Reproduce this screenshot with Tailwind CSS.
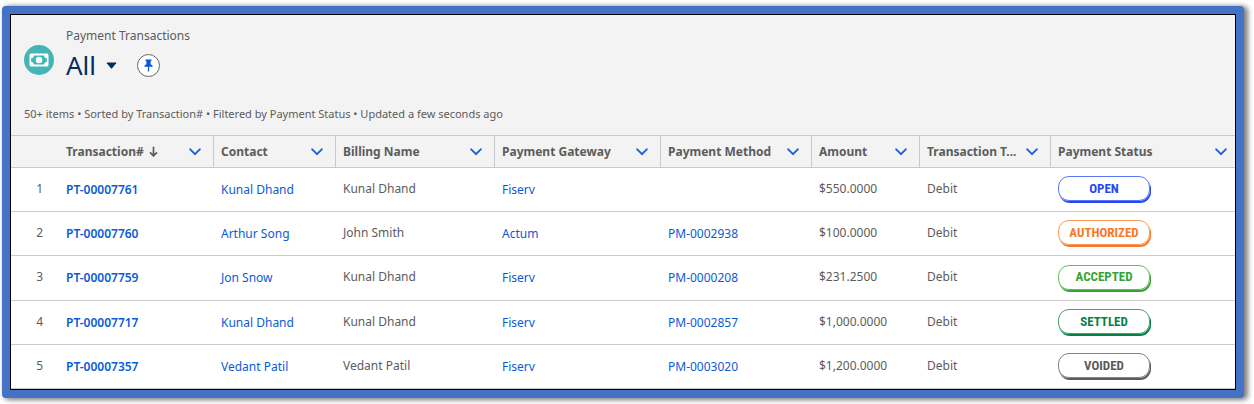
<!DOCTYPE html>
<html lang="en">
<head>
<meta charset="utf-8">
<meta name="viewport" content="width=device-width, initial-scale=1">
<title>Payment Transactions</title>
<script src="https://cdn.jsdelivr.net/npm/@tailwindcss/browser@4"></script>
</head>
<body class="bg-white pt-[6px] pr-[10px] pb-[6px] pl-[2px] font-['Noto_Sans',sans-serif] text-[12px] leading-5 text-[#5c5c5c]">
<svg class="hidden">
  <symbol id="chev" viewBox="0 0 12 8"><path d="M1.2 1.3 6 6.2l4.800-4.900" fill="none" stroke="#1b5fe0" stroke-width="1.900" stroke-linecap="round" stroke-linejoin="round"/></symbol>
</svg>
<main class="rounded-[4px] bg-[#4472c4] p-[8px] shadow-[3px_1px_5px_1px_rgba(0,0,0,0.5)]">
<div class="border border-black bg-[#f3f3f3]">
  <header class="px-[13px] pt-[11px]">
    <div class="flex">
      <svg class="mt-[19px] h-[30px] w-[30px] shrink-0" viewBox="0 0 30 30" aria-hidden="true">
        <circle cx="15" cy="15" r="15" fill="#43b5b5"/>
        <rect x="5.500" y="8.500" width="19" height="13" rx="1.500" fill="#fff"/>
        <path d="M9.800 10.500h10.400a2.600 2.600 0 0 0 2.600 2.600v3.800a2.600 2.600 0 0 0-2.600 2.600H9.800a2.600 2.600 0 0 0-2.600-2.600v-3.800a2.600 2.600 0 0 0 2.600-2.600z" fill="#43b5b5"/>
        <circle cx="15" cy="15" r="3.300" fill="#fff"/>
      </svg>
      <div class="ml-[12px]">
        <p>Payment Transactions</p>
        <div class="flex h-[38px] items-center">
          <h1 class="text-[26px] font-normal leading-[38px] text-[#032d60]">All</h1>
          <button type="button" aria-label="Select a list view" class="ml-[10px]">
            <svg class="h-[7px] w-[11px]" viewBox="0 0 11 7"><path d="M1.200.500h8.600q.900 0 .400.800L6.100 6.300q-.600.600-1.200 0L.800 1.300Q.300.500 1.200.500z" fill="#032d60"/></svg>
          </button>
          <button type="button" aria-label="Pin this list view" class="ml-[20px] flex h-[23px] w-[23px] items-center justify-center rounded-full border border-[#666] bg-white">
            <svg class="h-[13px] w-[9px]" viewBox="0 0 9 13"><path d="M1.500.500h6v1.300l-.900.500v2.900l1.900 1.300v1.200H5.100v4.800H3.900V7.700H.500V6.500l1.900-1.300V2.300l-.900-.500z" fill="#0b53e0"/></svg>
          </button>
        </div>
      </div>
    </div>
    <p class="mt-[20px] pb-[11px] text-[11px]">50+ items • Sorted by Transaction# • Filtered by Payment Status • Updated a few seconds ago</p>
  </header>
  <table class="w-full table-fixed border-separate border-spacing-0 bg-white">
    <colgroup><col class="w-[47px]"><col class="w-[155px]"><col class="w-[122px]"><col class="w-[159px]"><col class="w-[166px]"><col class="w-[151px]"><col class="w-[108px]"><col class="w-[131px]"><col></colgroup>
    <thead class="bg-[#f3f3f3] text-left font-bold">
      <tr class="h-[33px] [&>*]:border-y [&>*]:border-[#c9c9c9] [&>*]:p-0 [&>th]:border-l [&>th:nth-child(2)]:border-l-0 [&>th]:pl-[7px] [&>th:nth-child(2)]:pl-[8px] [&>th]:pr-[12px] [&>th:last-child]:pr-[8px]">
        <td></td>
        <th scope="col"><div class="flex items-center justify-between"><a href="#" class="flex items-center gap-[5px]">Transaction#<svg class="h-[11px] w-[9px]" viewBox="0 0 9 11"><path d="M4.500.700v9M1 6.300l3.500 3.600L8 6.300" fill="none" stroke="#5c5c5c" stroke-width="1.700"/></svg></a><button type="button" aria-label="Transaction# actions"><svg class="h-[8px] w-[12px]"><use href="#chev"/></svg></button></div></th>
        <th scope="col"><div class="flex items-center justify-between"><a href="#">Contact</a><button type="button" aria-label="Contact actions"><svg class="h-[8px] w-[12px]"><use href="#chev"/></svg></button></div></th>
        <th scope="col"><div class="flex items-center justify-between"><a href="#">Billing Name</a><button type="button" aria-label="Billing Name actions"><svg class="h-[8px] w-[12px]"><use href="#chev"/></svg></button></div></th>
        <th scope="col"><div class="flex items-center justify-between"><a href="#">Payment Gateway</a><button type="button" aria-label="Payment Gateway actions"><svg class="h-[8px] w-[12px]"><use href="#chev"/></svg></button></div></th>
        <th scope="col"><div class="flex items-center justify-between"><a href="#">Payment Method</a><button type="button" aria-label="Payment Method actions"><svg class="h-[8px] w-[12px]"><use href="#chev"/></svg></button></div></th>
        <th scope="col"><div class="flex items-center justify-between"><a href="#">Amount</a><button type="button" aria-label="Amount actions"><svg class="h-[8px] w-[12px]"><use href="#chev"/></svg></button></div></th>
        <th scope="col"><div class="flex items-center justify-between"><a href="#">Transaction T...</a><button type="button" aria-label="Transaction Type actions"><svg class="h-[8px] w-[12px]"><use href="#chev"/></svg></button></div></th>
        <th scope="col"><div class="flex items-center justify-between"><a href="#">Payment Status</a><button type="button" aria-label="Payment Status actions"><svg class="h-[8px] w-[12px]"><use href="#chev"/></svg></button></div></th>
      </tr>
    </thead>
    <tbody class="[&_td]:border-b [&_td]:border-[#c9c9c9] [&_td]:p-0 [&_td]:pb-[2px] [&_td]:pl-[8px] [&_td:first-child]:pr-[15px] [&_td:first-child]:text-right [&_a]:block [&_a]:pt-[2px] [&_a]:text-[#0b5bd8] [&_span]:flex [&_span]:h-[25px] [&_span]:w-[92px] [&_span]:items-center [&_span]:justify-center [&_span]:rounded-[11px] [&_span]:border [&_span]:border-current/75 [&_span]:shadow-[1px_2px_0_0_currentColor] [&_span]:font-['Roboto_Condensed','Liberation_Sans_Narrow',Roboto,sans-serif] [&_span]:text-[13px] [&_span]:font-bold">
      <tr class="h-[44px]"><td>1</td><td><a href="#" class="font-semibold">PT-00007761</a></td><td><a href="#">Kunal Dhand</a></td><td>Kunal Dhand</td><td><a href="#">Fiserv</a></td><td></td><td>$550.0000</td><td>Debit</td><td><span class="text-[#2447f5]">OPEN</span></td></tr>
      <tr class="h-[44px]"><td>2</td><td><a href="#" class="font-semibold">PT-00007760</a></td><td><a href="#">Arthur Song</a></td><td>John Smith</td><td><a href="#">Actum</a></td><td><a href="#">PM-0002938</a></td><td>$100.0000</td><td>Debit</td><td><span class="text-[#f97726]">AUTHORIZED</span></td></tr>
      <tr class="h-[45px]"><td>3</td><td><a href="#" class="font-semibold">PT-00007759</a></td><td><a href="#">Jon Snow</a></td><td>Kunal Dhand</td><td><a href="#">Fiserv</a></td><td><a href="#">PM-0000208</a></td><td>$231.2500</td><td>Debit</td><td><span class="text-[#35a32f]">ACCEPTED</span></td></tr>
      <tr class="h-[44px]"><td>4</td><td><a href="#" class="font-semibold">PT-00007717</a></td><td><a href="#">Kunal Dhand</a></td><td>Kunal Dhand</td><td><a href="#">Fiserv</a></td><td><a href="#">PM-0002857</a></td><td>$1,000.0000</td><td>Debit</td><td><span class="text-[#087f45]">SETTLED</span></td></tr>
      <tr class="h-[44px]"><td>5</td><td><a href="#" class="font-semibold">PT-00007357</a></td><td><a href="#">Vedant Patil</a></td><td>Vedant Patil</td><td><a href="#">Fiserv</a></td><td><a href="#">PM-0003020</a></td><td>$1,200.0000</td><td>Debit</td><td><span class="text-[#5b5b5b]">VOIDED</span></td></tr>
    </tbody>
  </table>
</div>
</main>
</body>
</html>
